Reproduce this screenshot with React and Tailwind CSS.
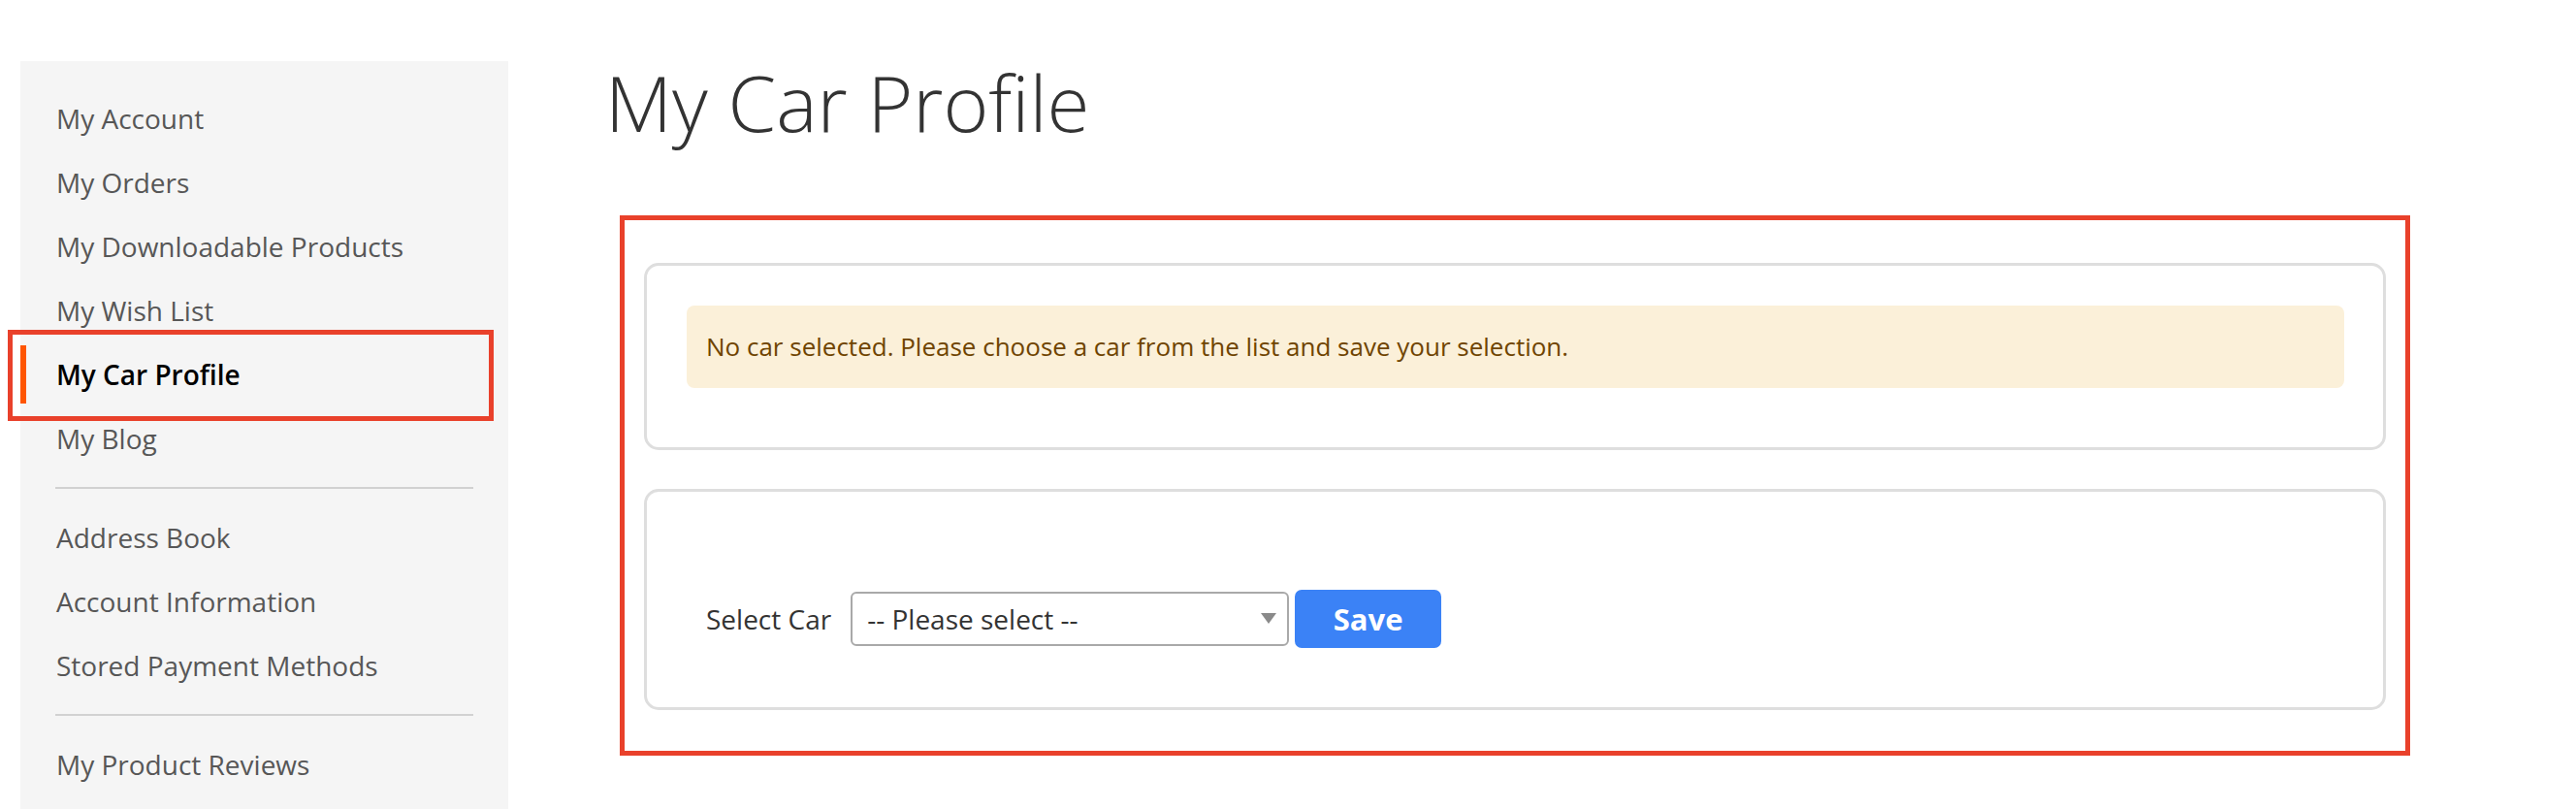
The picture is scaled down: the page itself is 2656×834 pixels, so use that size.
export default function App() {
  const items1 = ["My Account", "My Orders", "My Downloadable Products", "My Wish List"];
  const items2 = ["Address Book", "Account Information", "Stored Payment Methods"];
  const font = { fontFamily: '"Open Sans", "Liberation Sans", sans-serif' };
  return (
    <div className="flex w-[2656px] h-[834px] overflow-hidden bg-white" style={font}>
      <aside className="ml-[21px] mt-[63px] w-[503px] h-[800px] shrink-0 bg-[#f5f5f5] pt-[26px]">
        <ul className="text-[28px] text-[#575757]">
          {items1.map((t) => (
            <li key={t} className="h-[66px] leading-[66px] pl-[37px]">{t}</li>
          ))}
          <li className="relative h-[66px] flex items-center">
            <span className="absolute left-0 top-[3px] h-[60px] w-[6px] bg-[#ff5501]" />
            <span className="pl-[37px] leading-[66px] font-semibold text-black">My Car Profile</span>
            <span className="absolute -left-[13px] -top-[13px] right-[15px] -bottom-[15px] border-[5px] border-[#e9412b]" />
          </li>
          <li className="h-[66px] leading-[66px] pl-[37px]">My Blog</li>
          <li className="mx-9 my-[17px] h-[2px] bg-[#d1d1d1]" />
          {items2.map((t) => (
            <li key={t} className="h-[66px] leading-[66px] pl-[37px]">{t}</li>
          ))}
          <li className="mx-9 my-[17px] h-[2px] bg-[#d1d1d1]" />
          <li className="h-[66px] leading-[66px] pl-[37px]">My Product Reviews</li>
        </ul>
      </aside>
      <main className="ml-[100px] pt-[61px] w-[1861px] shrink-0">
        <h1 className="text-[80px] font-light leading-[88px] text-[#333]">My Car Profile</h1>
        <div className="mt-[73px] ml-[15px] border-[5px] border-[#e9412b] pl-[20px] pr-[20px] pt-[44px] pb-[42px]">
          <div className="border-[3px] border-[#dedede] rounded-[15px] pt-[41px] pb-[61px] pl-[41px] pr-[40px]">
            <div className="h-[85px] leading-[85px] rounded-[8px] bg-[#fbf0d9] px-5 text-[26px] text-[#6f4400]">
              No car selected. Please choose a car from the list and save your selection.
            </div>
          </div>
          <div className="mt-10 border-[3px] border-[#dedede] rounded-[15px] pt-[101px] pb-[61px] pl-[61px] flex items-center">
            <span className="text-[28px] leading-[40px] text-[#333]">Select Car</span>
            <div className="ml-[20px] w-[452px] h-[56px] border-2 border-[#a9a9a9] rounded-[6px] bg-white flex items-center justify-between pl-[15px] pr-[11px]">
              <span className="text-[28px] leading-[40px] text-[#333]">-- Please select --</span>
              <svg width="16" height="11" viewBox="0 0 16 11" className="mb-[1px]">
                <polygon points="0,0 16,0 8,11" fill="#8a8a8a" />
              </svg>
            </div>
            <button className="ml-[6px] h-[60px] w-[151px] rounded-[7px] bg-[#3b82f6] text-white text-[31px] font-bold leading-[60px]">
              Save
            </button>
          </div>
        </div>
      </main>
    </div>
  );
}
